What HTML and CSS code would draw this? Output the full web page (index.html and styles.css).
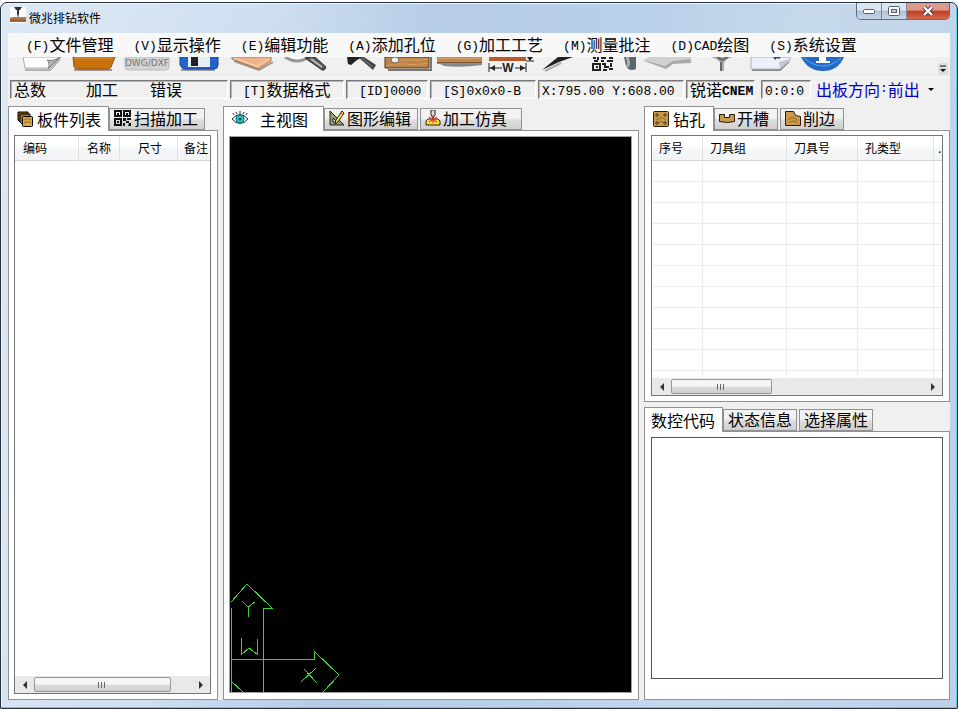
FILE: index.html
```
<!DOCTYPE html>
<html lang="zh-CN">
<head>
<meta charset="UTF-8">
<title>微兆排钻软件</title>
<link rel="stylesheet" href="styles.css">
</head>
<body>

<div class="window">
  <header class="titlebar">
    <svg class="app-icon" width="16" height="16" viewBox="0 0 16 16"><rect width="16" height="16" fill="#fff"/><path d="M4 0h8l-2 3H9v4l-1 4-1-4V3H6z" fill="#333"/><path d="M0 11l3-1h13v5H0z" fill="#a06538"/><path d="M0 11h16" stroke="#c99467"/></svg>
    <h1>微兆排钻软件</h1>
    <div class="window-buttons">
      <button class="win-btn" aria-label="最小化"><svg width="14" height="8" viewBox="0 0 14 8"><rect x="1.500" y="2.500" width="11" height="4" rx="1" fill="#fff" stroke="#56606c"/></svg></button>
      <button class="win-btn" aria-label="最大化"><svg width="12" height="10" viewBox="0 0 12 10"><rect x=".5" y=".5" width="11" height="9" rx="1" fill="#fff" stroke="#56606c"/><rect x="3.500" y="3.500" width="5" height="3" fill="#b9cbe0" stroke="#56606c"/></svg></button>
      <button class="win-btn close" aria-label="关闭"><svg width="12" height="10" viewBox="0 0 12 10"><path d="M2 1l8 8M10 1L2 9" stroke="#4b3338" stroke-width="4"/><path d="M2 1l8 8M10 1L2 9" stroke="#fff" stroke-width="2.400"/></svg></button>
    </div>
  </header>

  <nav class="menubar">
    <button><span class="en">(F)</span>文件管理</button>
    <button><span class="en">(V)</span>显示操作</button>
    <button><span class="en">(E)</span>编辑功能</button>
    <button><span class="en">(A)</span>添加孔位</button>
    <button><span class="en">(G)</span>加工工艺</button>
    <button><span class="en">(M)</span>测量批注</button>
    <button><span class="en">(D)CAD</span>绘图</button>
    <button><span class="en">(S)</span>系统设置</button>
  </nav>

  <div class="toolbar">
    <button aria-label="新建"><svg viewBox="0 0 52 21"><path d="M8 13h25l10-11" fill="none" stroke="#888" stroke-width="2" opacity=".6"/><path d="M6 0h38L32 11H8z" fill="#fdfdfd" stroke="#aaa"/><path d="M43 0L31 12c2-4 1-7-1-9 5 1 9 0 13-3z" fill="#b5b5b5" stroke="#777"/></svg></button>
    <button aria-label="打开"><svg viewBox="0 0 52 21"><path d="M5 13h38" stroke="#999" stroke-width="2"/><path d="M4 0h42l-4 10q-1 2-3 2H8q-2 0-3-2z" fill="#c9720c" stroke="#995007"/><path d="M6 1h38" stroke="#e39a3b"/></svg></button>
    <button aria-label="导入 DWG/DXF"><svg viewBox="0 0 52 21"><path d="M4 0h44v10q0 3-3 3H7q-3 0-3-3z" fill="#d3d3d3" stroke="#bdbdbd"/><text x="26" y="9" text-anchor="middle" class="dwg-text">DWG/DXF</text></svg></button>
    <button aria-label="保存"><svg viewBox="0 0 52 21"><path d="M8 13h34" stroke="#999" stroke-width="2"/><path d="M7 0h38v8q0 4-4 4H12q-3 0-5-4z" fill="#2463cb" stroke="#163f91"/><path d="M15 0h22v10H15z" fill="#e8eef6"/><path d="M18 0h7v9h-7z" fill="#222"/></svg></button>
    <button aria-label="板件"><svg viewBox="0 0 52 21"><path d="M9 4l25 9 14-8" fill="none" stroke="#999" stroke-width="2"/><path d="M7 0h39v4l-13 8L7 2z" fill="#eeb489" stroke="#b0714a"/><path d="M8 1l24 8 13-8" fill="none" stroke="#f9d8bd"/></svg></button>
    <button aria-label="查找"><svg viewBox="0 0 52 21"><path d="M8 0q12 8 24 0" fill="#fff" stroke="#999" stroke-width="3"/><path d="M28 1l6-1h4l11 10q-1 4-4 3z" fill="#555" stroke="#333"/><path d="M34 2l11 8" stroke="#bbb" stroke-width="2"/></svg></button>
    <button aria-label="选择"><svg viewBox="0 0 52 21"><path d="M18 0h16l-6 3-6 5-3-1z" fill="#222"/><path d="M29 0h6l12 8-3 5z" fill="#444"/><path d="M33 1l11 9" stroke="#888"/></svg></button>
    <button aria-label="添加孔"><svg viewBox="0 0 52 21"><path d="M7 13h43V0" fill="none" stroke="#777" stroke-width="2"/><path d="M4 0h44v11H4z" fill="#bd8348" stroke="#563218"/><path d="M18 4c9-3 18 1 29-2M5 9c14-5 26 1 42-3" fill="none" stroke="#d8a365"/><ellipse cx="14" cy="3" rx="4" ry="3" fill="#f1eee8" stroke="#756451"/></svg></button>
    <button aria-label="添加槽"><svg viewBox="0 0 52 21"><path d="M7 7h42v1q-20 3-38 1z" fill="#888"/><path d="M4 0h45v6H4z" fill="#bd8850"/><path d="M5 2c12-2 24 1 43-1" fill="none" stroke="#d7a76d"/><path d="M4 6h45" stroke="#3b2515"/></svg></button>
    <button aria-label="宽度"><svg viewBox="0 0 52 21"><path d="M4 0h37v4H4z" fill="#b85b2a"/><path d="M4 6v9M41 6v9M4 11h13M30 11h11M41 4h8M45 0v3" stroke="#222"/><path d="M5 11l5-3v6zM40 11l-5-3v6zM42 0h6l-3 4z" fill="#222"/><text x="23" y="15" text-anchor="middle" class="w-text">W</text></svg></button>
    <button aria-label="铣刀"><svg viewBox="0 0 52 21"><path d="M5 13L21 0h15L22 5z" fill="#222"/><path d="M8 14l16-8" stroke="#aaa" stroke-width="2"/></svg></button>
    <button aria-label="二维码"><svg viewBox="0 0 52 21"><path d="M4 1h3M9 0v3M12 1h5M20 1h4M5 4h4M12 4h3M18 4h6M4 7h7v6H4zM13 7h3v3h4M22 6v4M14 13h4M20 12h4" fill="none" stroke="#222" stroke-width="2"/><path d="M7 9h2v2H7z" fill="#222"/><path d="M35 0h12v12q-7 3-10-3z" fill="#59666c"/><path d="M38 0q3 7 0 10" fill="none" stroke="#a5b1b6" stroke-width="3"/></svg></button>
    <button aria-label="板材"><svg viewBox="0 0 52 21"><path d="M3 4l22 8 7-5 18-1V0H9z" fill="#aaa"/><path d="M2 3l22 6 8-5 18-2V0H9z" fill="#d1d1d1"/></svg></button>
    <button aria-label="钻头"><svg viewBox="0 0 52 21"><path d="M18 0h22l-6 2-3 4v8h-4V5l-4-3z" fill="#aaa"/><path d="M24 0l5 3 6-3M28 5v9" fill="none" stroke="#666" stroke-width="2"/></svg></button>
    <button aria-label="设置"><svg viewBox="0 0 52 21"><path d="M7 13h28l9-9" fill="none" stroke="#888" stroke-width="2"/><path d="M6 0h39v3l-10 9H6z" fill="#edf0fa" stroke="#a9b0c4"/><path d="M45 2L35 12l-1-7z" fill="#c2c8d8"/><path d="M28 0h8l-2 2-2-1-2 2z" fill="#234a88"/></svg></button>
    <button aria-label="关于"><svg viewBox="0 0 52 21"><path d="M4 0h43q-6 14-21 14T4 0z" fill="#226bc6"/><path d="M7 1q19 16 37 0" fill="none" stroke="#5da5ef"/><path d="M22 0h7v4h4v2H19V4h3z" fill="#fff"/></svg></button>
    <button class="overflow" aria-label="更多"><svg viewBox="0 0 10 12"><path d="M2 3h6" stroke="#111"/><path d="M2 6h6L5 9z" fill="#111"/></svg></button>
  </div>

  <div class="infobar">
    <div class="cell totals"><span>总数</span><span>加工</span><span>错误</span></div>
    <div class="cell format"><span class="en">[T]</span>数据格式</div>
    <div class="cell piece-id"><span class="en">[ID]0000</span></div>
    <div class="cell size"><span class="en">[S]0x0x0-B</span></div>
    <div class="cell coords"><span class="en">X:795.00 Y:608.00</span></div>
    <div class="cell machine">锐诺<b class="en">CNEM</b></div>
    <div class="cell clock"><span class="en">0:0:0</span></div>
    <button class="direction">出板方向<span class="en">:</span>前出<i class="caret"></i></button>
  </div>

  <main class="workspace">
    <section class="pane parts-pane">
      <div class="tabs" role="tablist">
        <button class="tab active" role="tab" aria-selected="true"><svg width="16" height="16" viewBox="0 0 16 16"><path d="M1 1h10v10H3L1 9z" fill="#8a5a18" stroke="#000"/><path d="M3 3h10v10H5l-2-2z" fill="#a97825" stroke="#000"/><rect x="5.500" y="5.500" width="10" height="10" rx="1" fill="#dba844" stroke="#000"/><path d="M7 9q4-3 7 0M7 12q4-3 7 0" fill="none" stroke="#8c6324"/></svg>板件列表</button>
        <button class="tab" role="tab"><svg width="18" height="16" viewBox="0 0 18 16"><path d="M1 1h6v5H1zM10 1h6v5h-6zM1 9h6v6H1z" fill="none" stroke="#111" stroke-width="2"/><path d="M3 3h2v2H3zM12 3h2v2h-2zM3 11h2v2H3zM9 8h3v3H9zM13 8h4v2h-4zM12 11h3v2h-3zM9 13h2v3H9zM15 13h2v3h-3z" fill="#111"/></svg>扫描加工</button>
      </div>
      <div class="panel">
        <div class="listbox">
          <table class="list parts">
            <thead><tr><th>编码</th><th>名称</th><th>尺寸</th><th>备注</th></tr></thead>
          </table>
          <div class="scrollbar">
            <button class="arrow left" aria-label="向左"></button>
            <div class="track"><div class="thumb"></div></div>
            <button class="arrow right" aria-label="向右"></button>
          </div>
        </div>
      </div>
    </section>

    <section class="pane view-pane">
      <div class="tabs" role="tablist">
        <button class="tab active" role="tab" aria-selected="true"><svg width="16" height="16" viewBox="0 0 16 16"><path d="M0 8q8-9 16 0-8 9-16 0z" fill="#fff" stroke="#234"/><circle cx="8" cy="8" r="4" fill="#2bd3d3" stroke="#066"/><circle cx="8" cy="8" r="1.500" fill="#042"/><path d="M2 4L1 2M5 3L4 1M8 3V0M11 3l1-2M14 4l1-2" stroke="#234"/></svg>主视图</button>
        <button class="tab" role="tab"><svg width="16" height="16" viewBox="0 0 16 16"><path d="M1 1v14h14z" fill="#9a9f70" stroke="#222"/><path d="M4 8v4h4z" fill="#eee" stroke="#222"/><path d="M13 1l2 2-6 9-3 2 1-4z" fill="#ffe75a" stroke="#222"/><path d="M12 3l2 2" stroke="#b22"/></svg>图形编辑</button>
        <button class="tab" role="tab"><svg width="16" height="16" viewBox="0 0 16 16"><path d="M1 11l2-2h10l2 2v4H1z" fill="#ffdc38" stroke="#222"/><path d="M6 0h4v5L8 8 6 5z" fill="#ddd" stroke="#222"/><path d="M8 5v8M4 7l8 5M12 7l-8 5" stroke="#d22"/></svg>加工仿真</button>
      </div>
      <div class="panel">
        <div class="viewport">
          <svg class="axes" width="110" height="110" viewBox="0 0 110 110">
            <path d="M1 20L17 2L42 26H33V110M1 26V110M1 77H84V69L109 93L93 110M1 99L13 110"/>
            <path d="M12 19L18 25L25 20M18 25V35M11 56V73L19 66L27 72V57M74 87L87 101M86 86L71 100"/>
          </svg>
        </div>
      </div>
    </section>

    <div class="side">
      <section class="pane drill">
        <div class="tabs" role="tablist">
          <button class="tab active" role="tab" aria-selected="true"><svg width="16" height="16" viewBox="0 0 16 16"><rect x=".5" y=".5" width="15" height="15" rx="1" fill="#c99b48" stroke="#2b1c08"/><path d="M3 9q5-4 10 0M4 12q4-3 8 0" fill="none" stroke="#8d6526"/><path d="M3 3h2v2H3zM11 3h2v2h-2zM3 11h2v2H3zM11 11h2v2h-2z" fill="#f3dfa9" stroke="#4a3110"/></svg>钻孔</button>
          <button class="tab" role="tab"><svg width="16" height="16" viewBox="0 0 16 16"><path d="M.5 4.500h5v3h5v-3h5v7q-7 2-15 0z" fill="#c99b48" stroke="#2b1c08"/></svg>开槽</button>
          <button class="tab" role="tab"><svg width="16" height="16" viewBox="0 0 16 16"><path d="M.5 1.500h8l2 4 5 1v9H.5z" fill="#c99b48" stroke="#2b1c08"/><path d="M3 10q5-5 10 1M4 13q4-4 8 0" fill="none" stroke="#8d6526"/></svg>削边</button>
        </div>
        <div class="panel">
          <div class="listbox">
            <div class="rows">
              <table class="list holes">
                <thead><tr><th>序号</th><th>刀具组</th><th>刀具号</th><th>孔类型</th><th>.</th></tr></thead>
                <tbody>
                  <tr><td></td><td></td><td></td><td></td><td></td></tr>
                  <tr><td></td><td></td><td></td><td></td><td></td></tr>
                  <tr><td></td><td></td><td></td><td></td><td></td></tr>
                  <tr><td></td><td></td><td></td><td></td><td></td></tr>
                  <tr><td></td><td></td><td></td><td></td><td></td></tr>
                  <tr><td></td><td></td><td></td><td></td><td></td></tr>
                  <tr><td></td><td></td><td></td><td></td><td></td></tr>
                  <tr><td></td><td></td><td></td><td></td><td></td></tr>
                  <tr><td></td><td></td><td></td><td></td><td></td></tr>
                  <tr><td></td><td></td><td></td><td></td><td></td></tr>
                  <tr><td></td><td></td><td></td><td></td><td></td></tr>
                </tbody>
              </table>
            </div>
            <div class="scrollbar">
              <button class="arrow left" aria-label="向左"></button>
              <div class="track"><div class="thumb"></div></div>
              <button class="arrow right" aria-label="向右"></button>
            </div>
          </div>
        </div>
      </section>

      <section class="pane code">
        <div class="tabs" role="tablist">
          <button class="tab active" role="tab" aria-selected="true">数控代码</button>
          <button class="tab" role="tab">状态信息</button>
          <button class="tab" role="tab">选择属性</button>
        </div>
        <div class="panel">
          <textarea class="code-box" aria-label="数控代码" spellcheck="false"></textarea>
        </div>
      </section>
    </div>
  </main>
</div>

</body>
</html>
```

FILE: styles.css
```
* {
  box-sizing: border-box;
}
body {
  margin: 0;
  padding-top: 2px;
  height: 100vh;
  display: flex;
  background: #fff;
  color: #000;
  font: 16px/20px "Noto Sans CJK SC", sans-serif;
}
h1 {
  margin: 0;
}
button {
  margin: 0;
  padding: 0;
  border: 0;
  background: none;
  color: inherit;
  font: inherit;
  white-space: nowrap;
}
svg {
  display: block;
  flex: none;
}
.en {
  font-family: "Liberation Mono", monospace;
  font-size: 13px;
  vertical-align: 1px;
}

/* window frame */
.window {
  flex: 1;
  min-width: 0;
  display: flex;
  flex-direction: column;
  padding: 0 7px 8px;
  border: 1px solid #25303f;
  border-radius: 7px 7px 1px 1px;
  background: linear-gradient(100deg, #dde8f4 0, #cfdff0 25%, #b7cde7 40%, #b9d0e9 60%, #c6d9ec 75%, #bdd0e6 100%);
  box-shadow: inset -1px -1px #58cdf0, inset 1px 1px #edf6fd;
}
.titlebar {
  height: 30px;
  display: flex;
  align-items: flex-start;
}
.app-icon {
  margin: 4px 3px 0 2px;
}
.titlebar h1 {
  margin-top: 5px;
  font-size: 12px;
  font-weight: 400;
}
.window-buttons {
  display: flex;
  margin-left: auto;
  border: 1px solid #5f6e80;
  border-top: 0;
  border-radius: 0 0 5px 5px;
  overflow: hidden;
}
.win-btn {
  width: 25px;
  height: 16px;
  display: flex;
  align-items: center;
  justify-content: center;
  border-right: 1px solid #7c8a9b;
  background: linear-gradient(#dbe5f0 45%, #b0c1d5 50%, #c7d6e7);
}
.win-btn.close {
  width: 42px;
  border-right: 0;
  background: linear-gradient(#dd9a8c 45%, #c13a20 50%, #d4694c);
}

/* menu and toolbar */
.menubar {
  height: 24px;
  display: flex;
  gap: 20px;
  padding-left: 18px;
  background: #f8f8f8;
}
.toolbar {
  height: 21px;
  display: flex;
  padding-left: 9px;
  background: #f0f0f0;
  border-bottom: 1px solid #fafafa;
}
.toolbar button {
  width: 52px;
}
.toolbar svg {
  width: 52px;
  height: 21px;
}
.toolbar .overflow {
  width: 10px;
  height: 12px;
  margin: 6px 2px 0 auto;
  background: #ddd;
}
.toolbar .overflow svg {
  width: 10px;
  height: 12px;
}
.dwg-text {
  font: 9px "DejaVu Sans", sans-serif;
  fill: #777;
}
.w-text {
  font: bold 12px "Liberation Sans", sans-serif;
  fill: #222;
}

/* status cells */
.infobar {
  display: flex;
  gap: 2px;
  padding: 2px 0 7px 2px;
  background: #f0f0f0;
}
.cell {
  height: 19px;
  line-height: 16px;
  white-space: nowrap;
  border: 1px solid #fff;
  border-top-color: #777;
  border-left-color: #777;
  box-shadow: inset 1px 1px #b5b5b5;
}
.cell.totals {
  display: flex;
  width: 218px;
  padding-left: 3px;
}
.totals span {
  margin-right: 32px;
}
.totals span:first-child {
  margin-right: 40px;
}
.cell.format {
  width: 114px;
  padding-left: 12px;
}
.cell.piece-id {
  width: 82px;
  padding-left: 12px;
}
.cell.size {
  width: 106px;
  padding-left: 12px;
}
.cell.coords {
  width: 146px;
  padding-left: 3px;
}
.cell.machine {
  width: 69px;
  padding-left: 3px;
}
.cell.clock {
  width: 50px;
  margin-left: 4px;
  padding-left: 3px;
}
.direction {
  display: flex;
  align-items: center;
  height: 18px;
  margin-left: 3px;
  color: #0000c8;
}
.caret {
  margin-left: 8px;
  border: 3px solid transparent;
  border-top-color: #000;
  border-bottom: 0;
}

/* panes */
.workspace {
  flex: 1;
  min-height: 0;
  display: grid;
  grid-template-columns: 210px minmax(0, 1fr) 306px;
  gap: 5px;
  background: #f0f0f0;
}
.side {
  display: flex;
  flex-direction: column;
  gap: 5px;
  min-height: 0;
}
.pane {
  display: flex;
  flex-direction: column;
  min-height: 0;
}
.drill {
  flex: 1 1 296px;
}
.code {
  flex: 1 1 293px;
}
.tabs {
  display: flex;
  align-items: flex-end;
  height: 24px;
}
.tab {
  display: flex;
  align-items: center;
  gap: 2px;
  height: 22px;
  margin-right: 2px;
  padding: 0 6px 2px 4px;
  border: 1px solid #919191;
  background: linear-gradient(#f2f2f2 45%, #dedede 55%, #d0d0d0);
}
.tab.active {
  position: relative;
  gap: 4px;
  height: 25px;
  margin: 0 0 -1px;
  padding: 0 7px 0 8px;
  border-bottom: 0;
  background: #fff;
}
.view-pane .tab.active {
  gap: 12px;
  padding-right: 15px;
}
.view-pane .tab:last-child {
  padding-right: 14px;
}
.drill .tab {
  padding-right: 8px;
}
.code .tab {
  padding: 0 4px 2px;
}
.code .tab.active {
  padding: 0 7px 0 6px;
}
.panel {
  flex: 1;
  min-height: 0;
  display: flex;
  padding: 4px 6px 5px;
  border: 1px solid #919191;
  background: #fff;
}
.parts-pane .panel {
  padding-left: 5px;
}
.listbox {
  flex: 1;
  min-width: 0;
  display: flex;
  flex-direction: column;
  border: 1px solid #71757b;
  background: #fff;
}
.rows {
  flex: 1;
  min-height: 0;
  overflow: hidden;
}

/* lists */
.list {
  width: 100%;
  table-layout: fixed;
  border-collapse: separate;
  border-spacing: 0;
}
.list th {
  height: 25px;
  padding: 0 0 1px 8px;
  overflow: hidden;
  white-space: nowrap;
  text-align: left;
  font-size: 12px;
  font-weight: 400;
  border-right: 1px solid #dfe3e8;
  border-bottom: 1px solid #d5d5d5;
  background: linear-gradient(#fff 45%, #f5f7f9 50%, #f1f3f5);
}
.list td {
  height: 21px;
  padding: 0;
  border-right: 1px solid #ececec;
  border-bottom: 1px solid #ececec;
}
.list th:last-child,
.list td:last-child {
  border-right: 0;
}
.parts th:nth-child(1) { width: 64px; }
.parts th:nth-child(2) { width: 41px; }
.parts th:nth-child(3) { width: 58px; }
.parts th:nth-child(3) { padding-left: 18px; }
.parts th:last-child { padding-left: 6px; }
.holes th:nth-child(1) { width: 51px; }
.holes th:nth-child(2) { width: 84px; }
.holes th:nth-child(3) { width: 71px; }
.holes th:nth-child(4) { width: 76px; }
.holes th { padding-left: 7px; }
.holes th:last-child { padding-left: 4px; }

.scrollbar {
  height: 17px;
  display: flex;
  margin-top: auto;
  background: #e9e9e9;
}
.arrow {
  width: 19px;
  display: flex;
  align-items: center;
  justify-content: center;
}
.arrow::before {
  content: "";
  border: 4px solid transparent;
}
.arrow.left::before {
  border-left: 0;
  border-right-color: #333;
}
.arrow.right::before {
  border-right: 0;
  border-left-color: #333;
}
.track {
  flex: 1;
  display: flex;
}
.thumb {
  width: 87%;
  height: 15px;
  margin-top: 1px;
  border: 1px solid #979797;
  border-radius: 2px;
  background:
    repeating-linear-gradient(90deg, #666 0 1px, transparent 1px 3px) center / 9px 6px no-repeat,
    linear-gradient(#f6f6f6 45%, #dcdcdc 55%, #cfcfcf);
}
.drill .thumb {
  width: 40%;
}

/* drawing area */
.view-pane .panel {
  padding: 6px 7px 7px 6px;
}
.viewport {
  flex: 1;
  min-width: 0;
  display: flex;
  align-items: flex-end;
  overflow: hidden;
  background: #000;
  box-shadow: 0 0 0 1px #a0a0a0;
}
.axes path {
  fill: none;
  stroke: #35d435;
  shape-rendering: crispEdges;
}
.code-box {
  flex: 1;
  min-width: 0;
  margin: 1px 0 15px;
  border: 1px solid #555;
  background: #fff;
  resize: none;
  outline: 0;
  font: 13px "Liberation Mono", monospace;
}
```
